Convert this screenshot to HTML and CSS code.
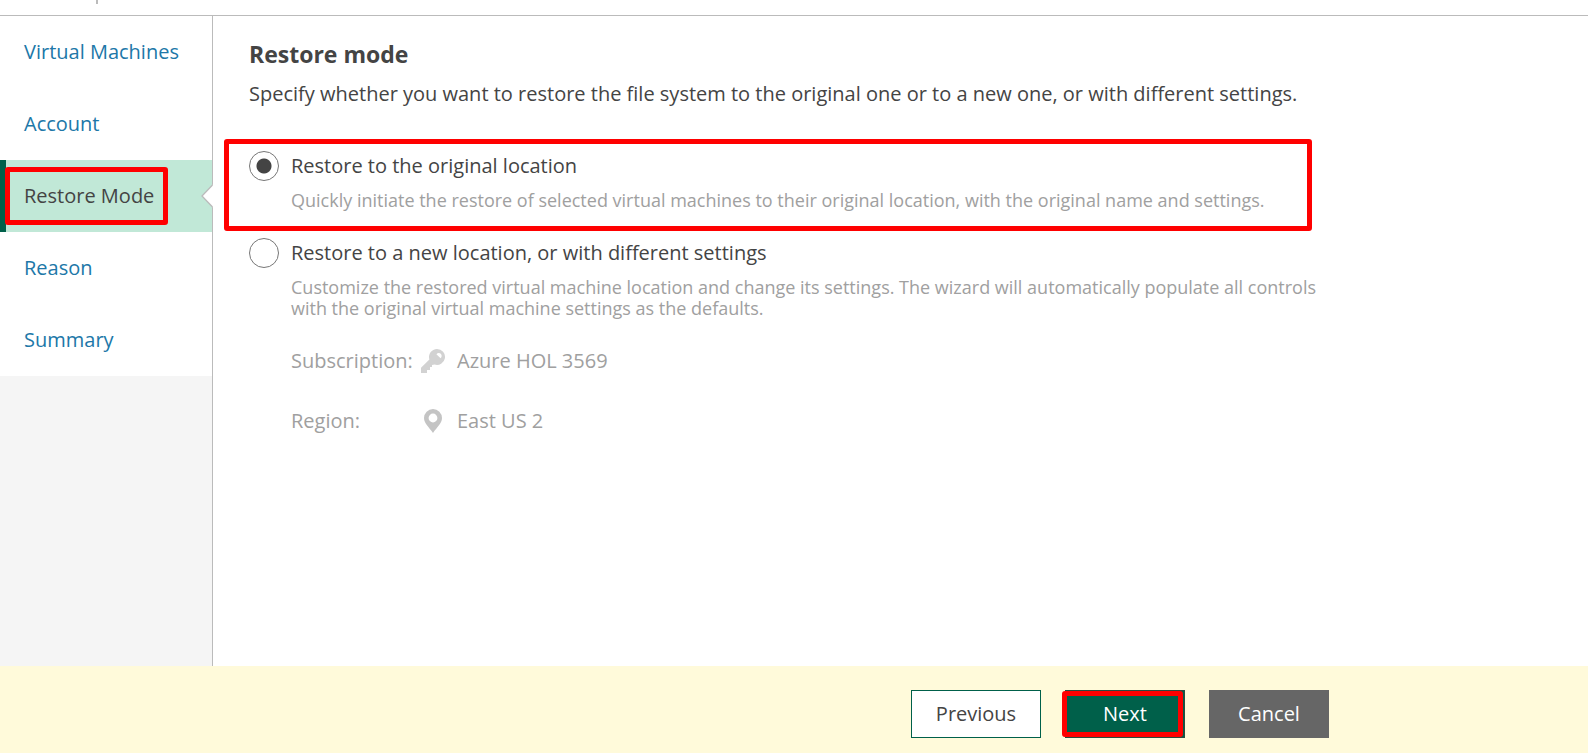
FILE: index.html
```html
<!DOCTYPE html>
<html lang="en">
<head>
<meta charset="utf-8">
<title>Restore mode</title>
<link rel="stylesheet" href="styles.css">
</head>
<body>
<div class="wizard">
  <header class="topbar"><span class="topbar-tick"></span></header>
  <div class="body">
    <nav class="steps" aria-label="Wizard steps">
      <a class="step" href="#machines">Virtual Machines</a>
      <a class="step" href="#account">Account</a>
      <a class="step step-active" href="#mode" aria-current="step">Restore Mode
        <svg class="step-arrow" width="12" height="24" viewBox="0 0 12 24" aria-hidden="true"><path d="M12 0.5 L1 12 L12 23.5Z" fill="#fff"/><path d="M11.5 1 L1 12 L11.5 23" fill="none" stroke="#bbb" stroke-width="1.3"/></svg>
        <span class="frame frame-step"></span>
      </a>
      <a class="step" href="#reason">Reason</a>
      <a class="step" href="#summary">Summary</a>
    </nav>
    <main class="content">
      <h1 class="title">Restore mode</h1>
      <p class="lead">Specify whether you want to restore the file system to the original one or to a new one, or with different settings.</p>
      <div class="options">
        <div class="option">
          <input class="radio" type="radio" name="mode" id="original" aria-describedby="original-note" checked>
          <label class="option-label" for="original">Restore to the original location</label>
          <p class="note" id="original-note">Quickly initiate the restore of selected virtual machines to their original location, with the original name and settings.</p>
          <span class="frame frame-option"></span>
        </div>
        <div class="option">
          <input class="radio" type="radio" name="mode" id="custom" aria-describedby="custom-note">
          <label class="option-label" for="custom">Restore to a new location, or with different settings</label>
          <p class="note" id="custom-note">Customize the restored virtual machine location and change its settings. The wizard will automatically populate all controls with the original virtual machine settings as the defaults.</p>
        </div>
      </div>
      <dl class="details">
        <dt>Subscription:</dt>
        <dd><svg class="icon" width="24" height="24" viewBox="0 0 24 24" aria-hidden="true"><path fill="#d2d2d2" fill-rule="evenodd" d="M16 0A8 8 0 0 0 8.4 10.5L0 18.8V24H6V21H9V18H11V16L13.5 15.6A8 8 0 1 0 16 0ZM15.4 5.2C16.6 3.6 18.8 3.6 20 5C21 6.4 20.8 8.2 19.6 9.2Z"/></svg>Azure HOL 3569</dd>
        <dt>Region:</dt>
        <dd><svg class="icon" width="24" height="24" viewBox="0 0 24 24" aria-hidden="true"><path fill="#c4c4c4" fill-rule="evenodd" d="M12 0A9 9 0 0 0 3 9C3 14.5 8 18 12 24C16 18 21 14.5 21 9A9 9 0 0 0 12 0ZM12 4.6A4.4 4.4 0 1 1 12 13.400A4.400 4.400 0 1 1 12 4.600Z"/></svg>East US 2</dd>
      </dl>
    </main>
  </div>
  <footer class="footer">
    <div class="actions">
      <button class="btn btn-previous" type="button">Previous</button>
      <button class="btn btn-next" type="button">Next<span class="frame frame-next"></span></button>
      <button class="btn btn-cancel" type="button">Cancel</button>
    </div>
  </footer>
</div>
</body>
</html>
```
FILE: styles.css
```css
* { box-sizing: border-box; }

body {
  margin: 0;
  background: #fff;
  color: #444;
  font: 20px/30px "Open Sans", "Noto Sans", sans-serif;
}

.wizard {
  display: flex;
  flex-direction: column;
  min-height: 100vh;
}

.topbar {
  display: flex;
  height: 16px;
  padding-left: 96px;
  border-bottom: 1px solid #bbb;
}

.topbar-tick {
  width: 2px;
  height: 4px;
  background: #bbb;
}

.body {
  display: flex;
  flex: 1;
}

.steps {
  flex: none;
  width: 213px;
  border-right: 1px solid #bbb;
  background: #f5f5f5;
}

.step {
  display: flex;
  align-items: center;
  position: relative;
  height: 72px;
  padding-left: 24px;
  background: #fff;
  color: #2077a8;
  text-decoration: none;
}

.step-active {
  padding-left: 18px;
  border-left: 6px solid #00604a;
  background: #c1e8d7;
  color: #444;
}

.step-arrow {
  position: absolute;
  top: 24px;
  right: -1px;
}

.content {
  flex: 1;
  padding: 22px 36px 24px;
}

.title {
  margin: 0;
  font-size: 23px;
  line-height: 32px;
}

.lead {
  margin: 9px 0 42px;
}

.options {
  display: grid;
  gap: 27px;
  max-width: 1080px;
}

.option {
  display: grid;
  grid-template-columns: 30px 1fr;
  column-gap: 12px;
  row-gap: 9px;
  position: relative;
}

.radio {
  appearance: none;
  width: 30px;
  height: 30px;
  margin: 0;
  border: 1px solid #777;
  border-radius: 50%;
  background: #fff;
}

.radio:checked {
  background: radial-gradient(circle, #444 7px, #fff 8px);
}

.note {
  grid-column: 2;
  margin: 0;
  color: #a0a0a0;
  font-size: 18px;
  line-height: 21px;
}

.details {
  display: grid;
  grid-template-columns: 118px 1fr;
  gap: 30px 12px;
  margin: 27px 0 0 42px;
  color: #a0a0a0;
}

.details dd {
  display: flex;
  align-items: center;
  gap: 12px;
  margin: 0;
}

.footer {
  padding: 24px 36px 15px 249px;
  background: #fffada;
}

.actions {
  display: flex;
  justify-content: flex-end;
  gap: 24px;
  max-width: 1080px;
}

.btn {
  position: relative;
  width: 120px;
  height: 48px;
  padding: 0;
  border: 1px solid #666;
  border-radius: 0;
  color: #fff;
  font: inherit;
}

.btn-previous {
  width: 130px;
  border-color: #00604a;
  background: #fff;
  color: #444;
}

.btn-next {
  border-color: #2b4a40;
  background: #00604a;
}

.btn-cancel { background: #666; }

/* Highlight frames laid over a control */
.frame {
  position: absolute;
  border: 5px solid #f00;
  border-radius: 3px;
  pointer-events: none;
}

.frame-step { inset: 7px 44px 7px -1px; }

.frame-option { inset: -12px 17px -20px -25px; }

.frame-next { inset: 0 1px 0 -4px; }
```
